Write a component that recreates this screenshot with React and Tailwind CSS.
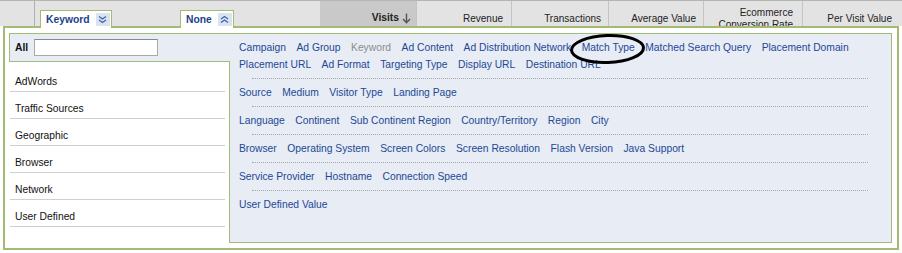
import React from 'react';

const groups = [
  ['Campaign', 'Ad Group', 'Keyword', 'Ad Content', 'Ad Distribution Network', 'Match Type', 'Matched Search Query', 'Placement Domain', 'Placement URL', 'Ad Format', 'Targeting Type', 'Display URL', 'Destination URL'],
  ['Source', 'Medium', 'Visitor Type', 'Landing Page'],
  ['Language', 'Continent', 'Sub Continent Region', 'Country/Territory', 'Region', 'City'],
  ['Browser', 'Operating System', 'Screen Colors', 'Screen Resolution', 'Flash Version', 'Java Support'],
  ['Service Provider', 'Hostname', 'Connection Speed'],
  ['User Defined Value'],
];

const categories = ['AdWords', 'Traffic Sources', 'Geographic', 'Browser', 'Network', 'User Defined'];

const Chevrons = ({ up }) => (
  <span className="w-[14px] h-[13px] bg-[#d9e3f2] flex items-center justify-center">
    <svg width="9" height="9" viewBox="0 0 9 9" className={up ? 'rotate-180' : ''}>
      <path d="M1 1.5 L4.5 4 L8 1.5 M1 5 L4.5 7.5 L8 5" fill="none" stroke="#3a62a8" strokeWidth="1.2" />
    </svg>
  </span>
);

const Tab = ({ label, up, className }) => (
  <div className={`relative z-10 h-[18px] -mb-[2px] bg-white border border-b-0 border-[#a3bb72] flex items-start pt-[2px] pl-[5px] pr-[1px] gap-[6px] ${className}`}>
    <span className="font-bold text-[#1d3f8a] leading-[13px]">{label}</span>
    <Chevrons up={up} />
  </div>
);

const HeadCell = ({ w, children, dark, className = '' }) => (
  <div className={`${w} shrink-0 h-full border-r border-[#c4c4c4] text-right text-[#222] leading-[12px] ${dark ? 'bg-[#c9c9c9]' : ''} ${className}`}>
    {children}
  </div>
);

export default function App() {
  return (
    <div className="w-[902px] h-[253px] bg-white overflow-hidden relative text-[10.3px]" style={{ fontFamily: '"Liberation Sans", Arial, sans-serif' }}>
      {/* header row */}
      <div className="h-[26px] bg-[#e3e3e3] border-t border-[#b5b5b5] flex items-end">
        <div className="w-[35px] shrink-0 h-full border-r border-[#b0b0b0]" />
        <div className="w-[285px] shrink-0 h-full flex items-end">
          <Tab label="Keyword" className="ml-[5px] w-[72px]" />
          <Tab label="None" up className="ml-[68px] w-[54px]" />
        </div>
        <HeadCell w="w-[97px]" dark className="pt-[11px] pr-[5px] font-bold flex justify-end items-start gap-[3px]">
          <span>Visits</span>
          <svg width="9" height="11" viewBox="0 0 9 11" className="mt-[1px]">
            <path d="M4.5 0.5 V9.5 M1 6 L4.5 9.8 L8 6" fill="none" stroke="#555" strokeWidth="1.4" />
          </svg>
        </HeadCell>
        <HeadCell w="w-[95px]" className="pt-[12px] pr-[8px] text-[10px]">Revenue</HeadCell>
        <HeadCell w="w-[97px]" className="pt-[12px] pr-[7px] text-[10px]">Transactions</HeadCell>
        <HeadCell w="w-[95px]" className="pt-[12px] pr-[7px] text-[10px]">Average Value</HeadCell>
        <HeadCell w="w-[99px]" className="pt-[6px] pr-[9px] text-[10px] overflow-hidden">
          Ecommerce<br />Conversion Rate
        </HeadCell>
        <div className="flex-1 h-full text-right pt-[12px] pr-[10px] text-[10px] leading-[12px] text-[#222]">Per Visit Value</div>
      </div>

      {/* green frame */}
      <div className="ml-[3px] w-[896px] h-[224px] border-2 border-[#a3bb72] bg-white pt-[5px] pb-[5px] pl-[4px] pr-[5px] flex">
        <div className="w-[220px] shrink-0 flex flex-col">
          <div className="relative z-10 w-[221px] h-[29px] bg-[#e8ecf4] border border-r-0 border-[#a3bb72] flex items-center pl-[5px] gap-[6px]">
            <span className="font-bold text-[#111]">All</span>
            <div className="w-[124px] h-[17px] bg-white border border-[#a9a9a9] border-t-[#8a8a8a]" />
          </div>
          <div className="pt-[3px] pl-[1px] pr-[4px]">
            {categories.map((c) => (
              <div key={c} className="h-[27px] pt-[10px] pl-[5px] border-b border-[#cfcfcf] leading-[13px] text-[#111]">
                {c}
              </div>
            ))}
          </div>
        </div>

        <div className="flex-1 bg-[#e8ecf4] border border-[#a3bb72] pl-[9px] pr-[6px] pt-[5px] relative">
          {groups.map((g, i) => (
            <div key={i}>
              {i > 0 && <div className="ml-[13px] w-[616px] border-t border-dotted border-[#a8a8a8] mt-[5px] mb-[5px]" />}
              <div className="flex flex-wrap gap-x-[10.5px] leading-[17px]">
                {g.map((l) => (
                  <span key={l} className={l === 'Keyword' && i === 0 ? 'text-[#8c8c8c]' : 'text-[#1c4896]'}>
                    {l}
                  </span>
                ))}
              </div>
            </div>
          ))}
        </div>
      </div>

      {/* hand-drawn circle around Match Type */}
      <svg className="absolute left-[568px] top-[32px]" width="80" height="34" viewBox="0 0 80 34">
        <ellipse cx="39.5" cy="17" rx="36" ry="13.5" fill="none" stroke="#000" strokeWidth="3" transform="rotate(-2 39.5 17)" />
      </svg>
    </div>
  );
}
